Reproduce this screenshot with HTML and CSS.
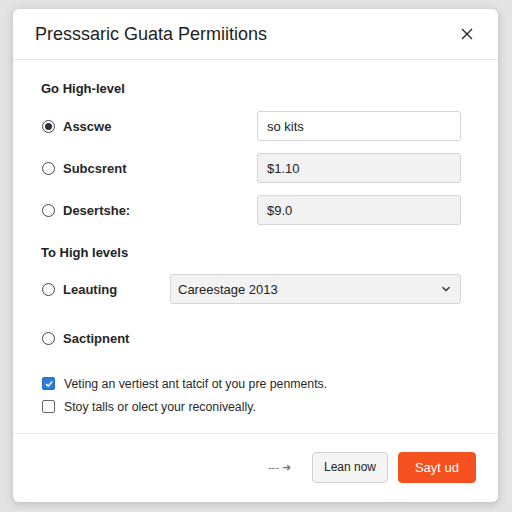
FILE: index.html
```html
<!DOCTYPE html>
<html>
<head>
<meta charset="utf-8">
<link rel="stylesheet" href="styles.css">
</head>
<body>
<div class="modal">
  <div class="header">
    <h1 class="title">Presssaric Guata Permiitions</h1>
    <svg class="close" width="12" height="12" viewBox="0 0 12 12"><path d="M1 1 L11 11 M11 1 L1 11" stroke="#222" stroke-width="1.3" fill="none"/></svg>
  </div>
  <div class="content">
    <div class="section-title">Go High-level</div>
    <div class="rows">
      <div class="row">
        <label class="opt wide"><span class="radio on"></span>Asscwe</label>
        <div class="field white">so kits</div>
      </div>
      <div class="row">
        <label class="opt wide"><span class="radio"></span>Subcsrent</label>
        <div class="field">$1.10</div>
      </div>
      <div class="row">
        <label class="opt wide"><span class="radio"></span>Desertshe:</label>
        <div class="field">$9.0</div>
      </div>
    </div>
    <div class="section-title second">To High levels</div>
    <div class="row">
      <label class="opt narrow"><span class="radio"></span>Leauting</label>
      <div class="field select">Careestage 2013
        <svg class="chev" width="10" height="6" viewBox="0 0 10 6"><path d="M1.5 1.2 L5 4.6 L8.5 1.2" fill="none" stroke="#333" stroke-width="1.4"/></svg>
      </div>
    </div>
    <div class="row solo">
      <label class="opt"><span class="radio"></span>Sactipnent</label>
    </div>
    <div class="checks">
      <label class="check"><span class="box on"><svg width="10" height="10" viewBox="0 0 10 10"><path d="M2 5.2 L4.2 7.2 L8.2 2.6" fill="none" stroke="#fff" stroke-width="1.6"/></svg></span>Veting an vertiest ant tatcif ot you pre penments.</label>
      <label class="check"><span class="box"></span>Stoy talls or olect your reconiveally.</label>
    </div>
  </div>
  <div class="footer">
    <span class="arrow">--- &#x279C;</span>
    <button class="btn secondary">Lean now</button>
    <button class="btn primary">Sayt ud</button>
  </div>
</div>
</body>
</html>
```

FILE: styles.css
```css
html, body {
  margin: 0;
  padding: 0;
}
body {
  background: #e3e3e3;
  width: 512px;
  height: 512px;
  overflow: hidden;
  font-family: "Liberation Sans", Arial, sans-serif;
  color: #222;
}
.modal {
  margin: 9px 0 0 13px;
  width: 485px;
  height: 493px;
  background: #fff;
  border-radius: 6px;
  box-shadow: 0 2px 8px rgba(0,0,0,0.18);
  display: flex;
  flex-direction: column;
}
.header {
  height: 50px;
  border-bottom: 1px solid #e4e4e4;
  display: flex;
  align-items: center;
  justify-content: space-between;
  padding: 0 25px 0 22px;
  flex: none;
}
.title {
  margin: 0;
  font-size: 18px;
  font-weight: normal;
  color: #1e1e1e;
}
.content {
  flex: 1;
  padding: 21px 37px 0 28px;
}
.section-title {
  font-size: 13px;
  font-weight: bold;
  line-height: 16px;
  color: #222;
  margin-bottom: 14px;
}
.section-title.second {
  margin-top: 20px;
  margin-bottom: 13px;
}
.rows {
  display: flex;
  flex-direction: column;
  gap: 12px;
}
.row {
  display: flex;
  align-items: center;
  height: 30px;
}
.row.solo {
  margin-top: 19px;
}
.opt {
  display: flex;
  align-items: center;
  font-size: 13px;
  font-weight: bold;
  color: #262626;
  flex: none;
}
.opt.wide { width: 216px; }
.opt.narrow { width: 129px; }
.radio {
  width: 11px;
  height: 11px;
  border: 1px solid #444;
  border-radius: 50%;
  margin: 0 8px 0 1px;
  box-sizing: content-box;
  display: inline-flex;
  align-items: center;
  justify-content: center;
}
.radio.on::after {
  content: "";
  width: 7px;
  height: 7px;
  border-radius: 50%;
  background: #2a3440;
}
.field {
  flex: 1;
  height: 30px;
  box-sizing: border-box;
  border: 1px solid #d6d6d6;
  border-radius: 3px;
  background: #f2f2f2;
  font-size: 13px;
  color: #222;
  display: flex;
  align-items: center;
  padding-left: 9px;
}
.field.white { background: #fff; }
.field.select {
  font-size: 13px;
  padding-left: 7px;
  padding-right: 9px;
  justify-content: space-between;
}
.checks {
  margin-top: 19px;
  display: flex;
  flex-direction: column;
}
.check {
  display: flex;
  align-items: center;
  height: 23px;
  font-size: 12.3px;
  color: #2a2a2a;
}
.box {
  width: 11px;
  height: 11px;
  border: 1px solid #666;
  border-radius: 2px;
  margin: 0 9px 0 1px;
  display: inline-flex;
  align-items: center;
  justify-content: center;
}
.box.on {
  background: #2b7ddb;
  border-color: #2b6cc0;
}
.footer {
  flex: none;
  height: 66px;
  border-top: 1px solid #e6e6e6;
  display: flex;
  align-items: center;
  justify-content: flex-end;
  padding: 0 22px 2px 0;
  gap: 10px;
}
.arrow {
  font-size: 11px;
  color: #777;
  margin-right: 11px;
}
.btn {
  height: 31px;
  border-radius: 4px;
  font-family: "Liberation Sans", Arial, sans-serif;
  font-size: 13px;
  cursor: pointer;
}
.btn.secondary {
  width: 76px;
  font-size: 12px;
  background: #f4f4f4;
  border: 1px solid #d2d2d2;
  color: #222;
}
.btn.primary {
  width: 78px;
  background: #f4511e;
  border: 1px solid #f4511e;
  color: #fff;
}
```
